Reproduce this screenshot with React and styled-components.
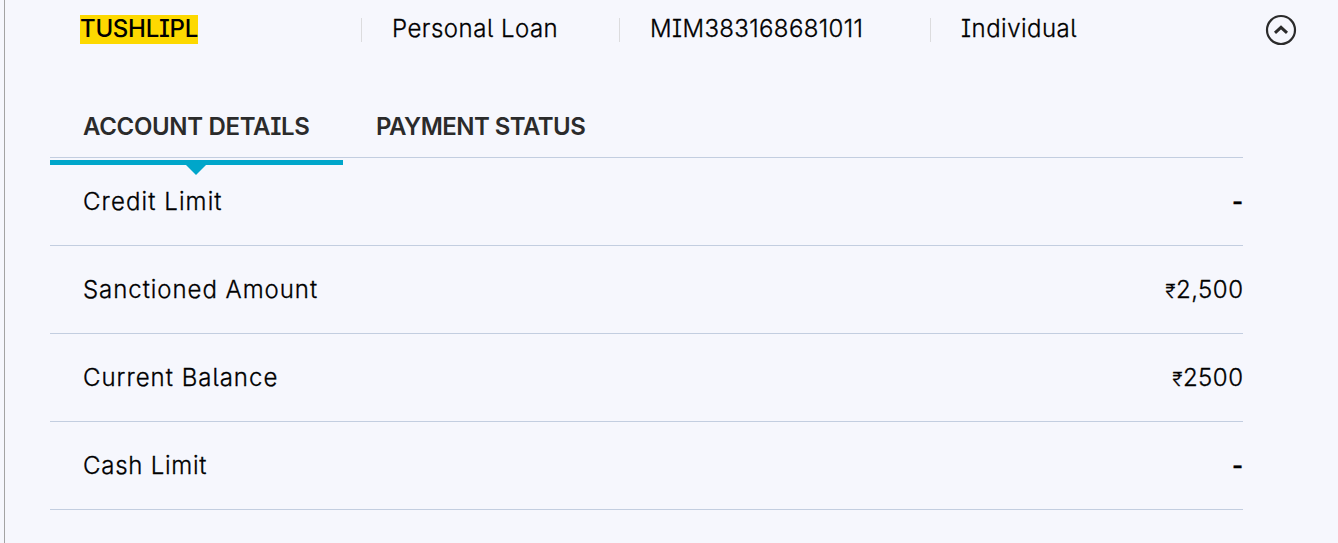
import React, { useState } from "react";
import styled, { createGlobalStyle } from "styled-components";

const GlobalStyle = createGlobalStyle`
  body {
    margin: 0;
    background: #f6f7fd;
  }
`;

const Page = styled.div`
  box-sizing: border-box;
  height: 543px;
  margin-left: 4px;
  padding: 0 41px 0 45px;
  overflow: hidden;
  border-left: 1px solid #a3a3a3;
  background: #f6f7fd;
  color: #000;
  font-family: Inter, "Noto Sans", sans-serif;
  font-feature-settings: "cv05", "cv08";
  font-size: 24px;
  font-weight: 300;
  line-height: 30px;
  white-space: nowrap;
  -webkit-text-stroke: 0.3px currentColor;
`;

const Summary = styled.div`
  display: flex;
  align-items: center;
  height: 60px;
  padding-left: 30px;
`;

const SummaryCell = styled.div`
  box-sizing: border-box;
  flex: 0 0 ${(props) => props.$width}px;
  height: 24px;
  padding-left: ${(props) => (props.$first ? 0 : 30)}px;
  border-left: ${(props) => (props.$first ? "none" : "1px solid #dcdcde")};
  line-height: 22px;
  letter-spacing: ${(props) => props.$spacing || 0}px;
`;

const Lender = styled.mark`
  display: inline-block;
  height: 29px;
  margin-top: -3px;
  background: #fdd900;
  color: #000;
  font-weight: 500;
  line-height: 28px;
  letter-spacing: -0.28px;
  -webkit-text-stroke: 0;
`;

const ToggleButton = styled.button`
  display: flex;
  margin-left: auto;
  padding: 0;
  border: none;
  background: none;
  color: #2b2b2b;
  cursor: pointer;
`;

const Details = styled.div`
  width: 1193px;
  margin-top: 34px;
`;

const TabList = styled.div`
  display: flex;
  height: 63px;
  border-bottom: 1px solid #c3cee0;
`;

const Tab = styled.button`
  position: relative;
  box-sizing: border-box;
  height: 63px;
  padding: 2px 33px 0;
  flex: 0 0 ${(props) => props.$width}px;
  border: none;
  background: none;
  color: #2b2b2b;
  font: inherit;
  font-weight: 600;
  font-feature-settings: inherit;
  line-height: 30px;
  letter-spacing: ${(props) => props.$spacing}px;
  text-align: left;
  cursor: pointer;
  -webkit-text-stroke: 0;
`;

const TabMarker = styled.span`
  position: absolute;
  left: 0;
  top: 66px;
  width: 293px;
  height: 5px;
  background: #00a6ca;

  &::after {
    content: "";
    position: absolute;
    top: 5px;
    left: 136px;
    border: 10px solid transparent;
    border-top-color: #00a6ca;
    border-bottom: none;
  }
`;

const Row = styled.div`
  display: flex;
  justify-content: space-between;
  align-items: center;
  height: 87px;
  padding-left: 33px;
  border-bottom: 1px solid #c3cee0;
`;

const Label = styled.span`
  letter-spacing: ${(props) => props.$spacing || 0}px;
`;

const Value = styled.span`
  letter-spacing: ${(props) => (props.$amount ? 0.5 : 0)}px;
  margin-right: ${(props) => (props.$amount ? -0.5 : 0)}px;
  font-weight: ${(props) => (props.$amount ? 300 : 500)};
`;

const Rupee = styled.span`
  font-size: 19px;
  line-height: 1;
`;

const tabs = [
  { name: "ACCOUNT DETAILS", spacing: -0.33, width: 293 },
  { name: "PAYMENT STATUS", spacing: -0.55, width: 276 },
];

const rows = [
  { label: "Credit Limit", value: "-", spacing: 1.1 },
  { label: "Sanctioned Amount", value: "2,500", amount: true, spacing: 0.95 },
  { label: "Current Balance", value: "2500", amount: true, spacing: 1 },
  { label: "Cash Limit", value: "-", spacing: 0.75 },
];

const App = () => {
  const [activeTab, setActiveTab] = useState(0);

  return (
    <>
      <GlobalStyle />
      <Page>
        <Summary>
          <SummaryCell $first $width={281}>
            <Lender>TUSHLIPL</Lender>
          </SummaryCell>
          <SummaryCell $width={258} $spacing={0.5}>Personal Loan</SummaryCell>
          <SummaryCell $width={311} $spacing={0.37}>MIM383168681011</SummaryCell>
          <SummaryCell $width={200} $spacing={0.48}>Individual</SummaryCell>
          <ToggleButton aria-label="Collapse account">
            <svg width="32" height="32" viewBox="0 0 32 32" fill="none" stroke="currentColor">
              <circle cx="16" cy="16" r="14" strokeWidth="2.2" />
              <path d="M10 18.9 16 13.4l6 5.5" strokeWidth="3" />
            </svg>
          </ToggleButton>
        </Summary>

        <Details>
          <TabList>
            {tabs.map((tab, index) => (
              <Tab
                key={tab.name}
                $spacing={tab.spacing}
                $width={tab.width}
                onClick={() => setActiveTab(index)}
              >
                {tab.name}
                {activeTab === index && <TabMarker />}
              </Tab>
            ))}
          </TabList>
          {rows.map((row) => (
            <Row key={row.label}>
              <Label $spacing={row.spacing}>{row.label}</Label>
              <Value $amount={row.amount}>
                {row.amount && <Rupee>₹</Rupee>}
                {row.value}
              </Value>
            </Row>
          ))}
        </Details>
      </Page>
    </>
  );
};

export default App;
